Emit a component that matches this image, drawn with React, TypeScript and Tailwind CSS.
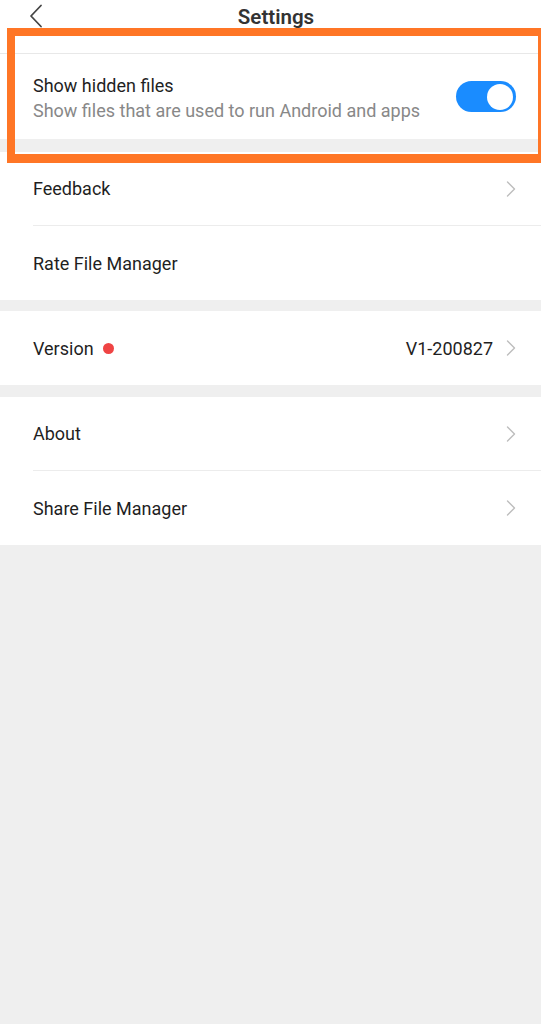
import React, { useState } from 'react';

const Chevron: React.FC = () => (
  <svg width="10" height="16" viewBox="0 0 10 16" fill="none" className="shrink-0">
    <path d="M1.5 1 L8.5 8 L1.5 15" stroke="#bdbdbd" strokeWidth="1.4" strokeLinecap="round" strokeLinejoin="round" />
  </svg>
);

const Row: React.FC<{ label: string; right?: React.ReactNode; dot?: boolean; arrow?: boolean; divider?: boolean }> = ({
  label, right, dot, arrow = true, divider,
}) => (
  <div className="bg-white">
    <div className={`${divider ? 'h-[73px]' : 'h-[74px]'} flex items-center pl-[33px] pr-[25px]`}>
      <span className="text-[18px] text-[#1f1f1f]">{label}</span>
      {dot && <span className="ml-[9px] w-[11px] h-[11px] rounded-full bg-[#ef4444]" />}
      <div className="flex-1" />
      {right && <span className="text-[18px] text-[#1f1f1f] mr-[13px]">{right}</span>}
      {arrow && <Chevron />}
    </div>
    {divider && <div className="ml-[33px] h-px bg-[#ececec]" />}
  </div>
);

export default function App() {
  const [hidden, setHidden] = useState(true);

  return (
    <div className="relative min-h-screen bg-[#efefef]" style={{ fontFamily: 'Roboto, "Noto Sans", sans-serif' }}>
      {/* Header */}
      <div className="relative bg-white h-[54px] border-b border-[#e8e8e8]">
        <svg width="14" height="24" viewBox="0 0 14 24" fill="none" className="absolute left-[29px] top-[4px]">
          <path d="M12 1.5 L2 12 L12 22.5" stroke="#444" strokeWidth="1.8" strokeLinecap="round" strokeLinejoin="round" />
        </svg>
        <div className="text-center pl-[11px] pt-[4px] text-[20.5px] font-semibold text-[#333] leading-[27px]">Settings</div>
      </div>

      {/* Hidden files */}
      <div className="bg-white h-[85px] flex items-center pl-[33px] pr-[25px]">
        <div className="flex-1 min-w-0 pt-[4px]">
          <p className="text-[18px] text-[#1f1f1f] leading-[24px]">Show hidden files</p>
          <p className="text-[18px] text-[#888] leading-[25px]">Show files that are used to run Android and apps</p>
        </div>
        <button
          onClick={() => setHidden(!hidden)}
          className={`w-[60px] h-[31px] rounded-full flex items-center px-[3px] ${hidden ? 'bg-[#1a8cff] justify-end' : 'bg-[#d0d0d0] justify-start'}`}
        >
          <span className="w-[26px] h-[26px] rounded-full bg-white" />
        </button>
      </div>

      <div className="h-[13px]" />
      <Row label="Feedback" divider />
      <Row label="Rate File Manager" arrow={false} />

      <div className="h-[11px]" />
      <Row label="Version" dot right="V1-200827" />

      <div className="h-[12px]" />
      <Row label="About" divider />
      <Row label="Share File Manager" />

      {/* Highlight box */}
      <div className="absolute left-[7px] top-[28px] w-[534px] h-[135px] border-[#ff7626] border-t-[8px] border-l-[8px] border-b-[9px] border-r-[3px] pointer-events-none" />
    </div>
  );
}
